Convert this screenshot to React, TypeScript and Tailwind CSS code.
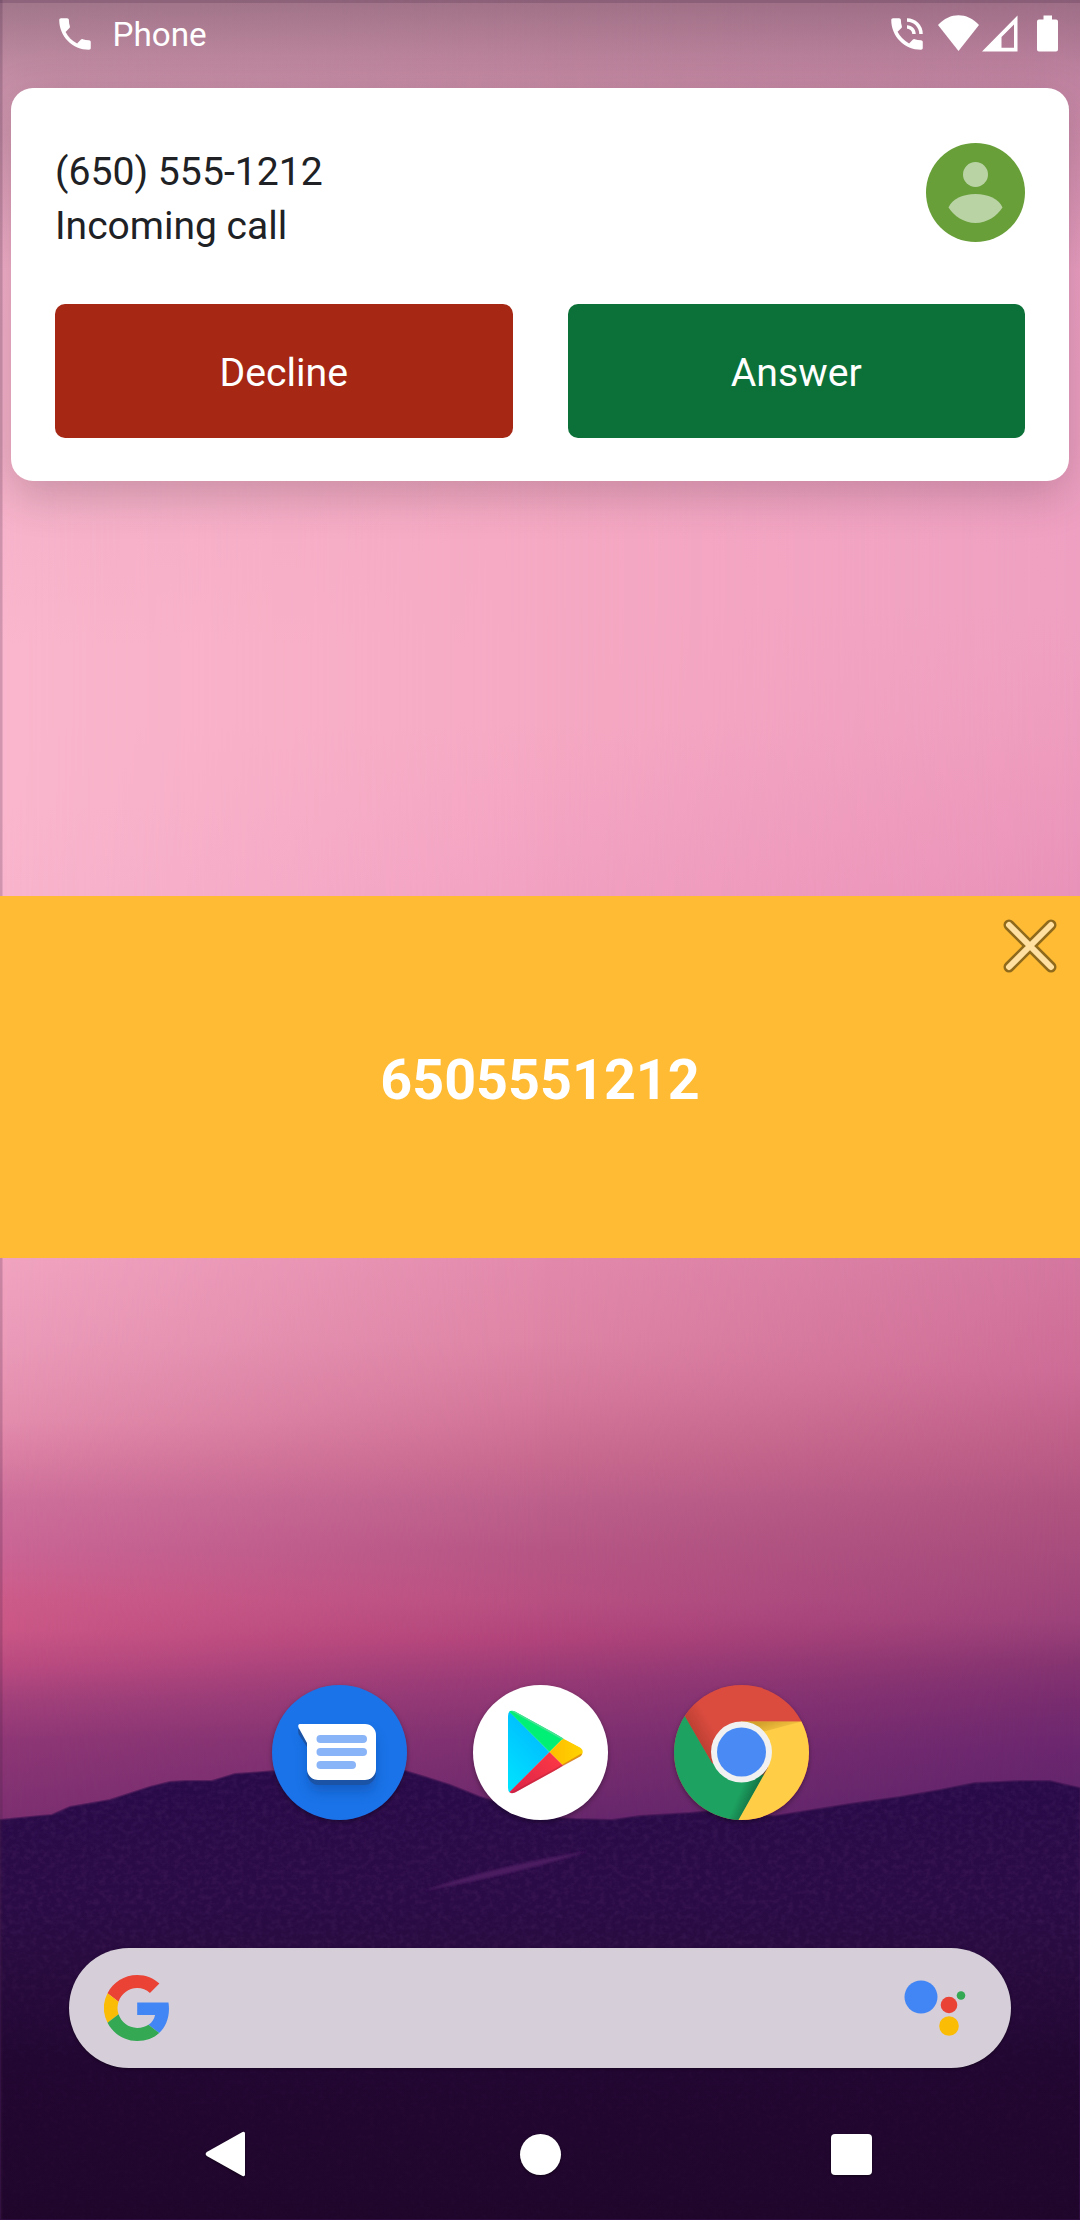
import React from 'react';

type Stop = [number, string];

const SKY_LEFT: Stop[] = [
  [0, '#f2adcb'], [500, '#f6b3ca'], [650, '#fab7cd'], [800, '#fab7cd'], [890, '#f9b5cd'], [1258, '#f1a4c0'], [1340, '#eb9bb9'], [1420, '#e48dad'],
  [1460, '#da7ea3'], [1500, '#ce6f9b'], [1550, '#ca6595'], [1600, '#cd5b89'], [1630, '#ca5786'],
  [1670, '#b84a80'], [1700, '#a2417b'], [1740, '#8f3776'], [1820, '#7c2f70'],
];
const SKY_MID: Stop[] = [
  [0, '#f0a5c6'], [550, '#f6a9c3'], [720, '#f6a9c3'], [890, '#f2a1c1'], [1258, '#e38aac'], [1340, '#de84a5'], [1400, '#d5789b'],
  [1460, '#c8698f'], [1500, '#bd608b'], [1550, '#b65685'], [1600, '#b85082'], [1640, '#b0437a'],
  [1680, '#973a76'], [1740, '#7e3070'], [1820, '#68276c'],
];
const SKY_RIGHT: Stop[] = [
  [0, '#ec9fc4'], [600, '#efa0c1'], [730, '#ee9cbe'], [890, '#e992b9'], [1258, '#d4779f'], [1370, '#cd6c96'], [1440, '#be5f88'],
  [1500, '#b05380'], [1560, '#a64b7c'], [1620, '#9c427a'], [1660, '#873571'], [1700, '#782c6f'],
  [1750, '#6a266e'], [1820, '#5e2469'],
];

function Vertical({ id, stops }: { id: string; stops: Stop[] }) {
  return (
    <linearGradient id={id} gradientUnits="userSpaceOnUse" x1="0" y1="0" x2="0" y2="1820">
      {stops.map(([y, c]) => (
        <stop key={y} offset={y / 1820} stopColor={c} />
      ))}
    </linearGradient>
  );
}

function Wallpaper() {
  const ridge =
    'M0 1820 L40 1816 L52 1815 L70 1807 L110 1800 L150 1787 L170 1782 L185 1781 L212 1781 L235 1774 L250 1773 L275 1771 L330 1762 L405 1771 L425 1777 L450 1785 L480 1797 L500 1803 L540 1817 L575 1819 L612 1820 L640 1816 L690 1813 L710 1811 L750 1816 L775 1816 L800 1812 L850 1804 L900 1797 L940 1790 L975 1783 L1000 1782 L1020 1781 L1050 1781 L1062 1784 L1080 1788 L1080 2220 L0 2220 Z';
  return (
    <svg className="absolute inset-0 h-full w-full" viewBox="0 0 1080 2220" aria-hidden="true">
      <defs>
        <Vertical id="skyL" stops={SKY_LEFT} />
        <Vertical id="skyM" stops={SKY_MID} />
        <Vertical id="skyR" stops={SKY_RIGHT} />
        <linearGradient id="fadeM" gradientUnits="userSpaceOnUse" x1="0" y1="0" x2="540" y2="0">
          <stop offset="0" stopColor="#fff" stopOpacity="0" />
          <stop offset="1" stopColor="#fff" />
        </linearGradient>
        <linearGradient id="fadeR" gradientUnits="userSpaceOnUse" x1="540" y1="0" x2="1080" y2="0">
          <stop offset="0" stopColor="#fff" stopOpacity="0" />
          <stop offset="1" stopColor="#fff" />
        </linearGradient>
        <mask id="maskM" maskUnits="userSpaceOnUse" x="0" y="0" width="1080" height="2220" style={{ maskType: 'alpha' }}>
          <rect width="1080" height="2220" fill="url(#fadeM)" />
        </mask>
        <mask id="maskR" maskUnits="userSpaceOnUse" x="0" y="0" width="1080" height="2220" style={{ maskType: 'alpha' }}>
          <rect width="1080" height="2220" fill="url(#fadeR)" />
        </mask>
        <linearGradient id="hill" gradientUnits="userSpaceOnUse" x1="0" y1="1760" x2="0" y2="2220">
          <stop offset="0" stopColor="#290a49" />
          <stop offset="0.3" stopColor="#2a0b46" />
          <stop offset="0.45" stopColor="#280b3e" />
          <stop offset="0.65" stopColor="#220732" />
          <stop offset="1" stopColor="#20062b" />
        </linearGradient>
        <linearGradient id="grainFade" gradientUnits="userSpaceOnUse" x1="0" y1="1760" x2="0" y2="2220">
          <stop offset="0" stopColor="#fff" stopOpacity="0.16" />
          <stop offset="0.35" stopColor="#fff" stopOpacity="0.16" />
          <stop offset="0.6" stopColor="#fff" stopOpacity="0.05" />
          <stop offset="1" stopColor="#fff" stopOpacity="0.03" />
        </linearGradient>
        <mask id="grainMask" maskUnits="userSpaceOnUse" x="0" y="1760" width="1080" height="460" style={{ maskType: 'alpha' }}>
          <path d={ridge} fill="url(#grainFade)" />
        </mask>
        <filter id="grain" x="0" y="0" width="100%" height="100%">
          <feTurbulence type="fractalNoise" baseFrequency="0.16 0.2" numOctaves="3" seed="4" />
          <feColorMatrix values="0 0 0 0 0.36  0 0 0 0 0.12  0 0 0 0 0.42  1.3 0 0 0 -0.5" />
        </filter>
        <filter id="soft" x="-20%" y="-50%" width="140%" height="200%">
          <feGaussianBlur stdDeviation="1.2" />
        </filter>
        <linearGradient id="scrim" x1="0" y1="0" x2="0" y2="1">
          <stop offset="0" stopColor="#1c1c20" stopOpacity="0.38" />
          <stop offset="0.3" stopColor="#1c1c20" stopOpacity="0.21" />
          <stop offset="1" stopColor="#1c1c20" stopOpacity="0" />
        </linearGradient>
      </defs>
      <rect width="1080" height="1830" fill="url(#skyL)" />
      <rect width="1080" height="1830" fill="url(#skyM)" mask="url(#maskM)" />
      <rect width="1080" height="1830" fill="url(#skyR)" mask="url(#maskR)" />
      <path d={ridge} fill="url(#hill)" stroke="#3a1250" strokeOpacity="0.6" strokeWidth="2" />
      <g mask="url(#grainMask)">
        <rect y="1760" width="1080" height="460" filter="url(#grain)" />
      </g>
      <path d="M423 1891 Q490 1867 588 1851 Q530 1871 423 1891 Z" fill="#4b1d60" filter="url(#soft)" />
      <rect width="1080" height="270" fill="url(#scrim)" />
      <rect width="1080" height="3" fill="#30183a" fillOpacity="0.18" />
      <rect width="2.5" height="2220" fill="#402040" fillOpacity="0.22" />
    </svg>
  );
}

const PHONE_PATH =
  'M6.62 10.79c1.44 2.83 3.76 5.14 6.59 6.59l2.2-2.2c.27-.27.67-.36 1.02-.24 1.12.37 2.33.57 3.57.57.55 0 1 .45 1 1V20c0 .55-.45 1-1 1-9.39 0-17-7.61-17-17 0-.55.45-1 1-1h3.5c.55 0 1 .45 1 1 0 1.25.2 2.45.57 3.57.11.35.03.74-.25 1.02l-2.2 2.2z';

function StatusBar() {
  return (
    <header className="flex h-[88px] items-start justify-between pr-[22px] pl-[54px] text-white">
      <div className="flex items-center">
        <svg className="mt-[13px] h-[42px] w-[42px]" viewBox="0 0 24 24" fill="currentColor">
          <path d={PHONE_PATH} />
        </svg>
        <span className="mt-[14px] ml-[16.500px] text-[33.200px] leading-[40px]">Phone</span>
      </div>
      <div className="flex pt-[15px]">
        <svg className="mt-[-2px] h-[42px] w-[42px]" viewBox="0 0 24 24" fill="currentColor">
          <path d="M20 15.5c-1.25 0-2.45-.2-3.57-.57a1.02 1.02 0 0 0-1.02.24l-2.2 2.2a15.05 15.05 0 0 1-6.59-6.59l2.2-2.21c.28-.26.36-.65.25-1C8.7 6.45 8.5 5.25 8.5 4c0-.55-.45-1-1-1H4c-.55 0-1 .45-1 1 0 9.39 7.61 17 17 17 .55 0 1-.45 1-1v-3.5c0-.55-.45-1-1-1zM19 12h2a9 9 0 0 0-9-9v2c3.87 0 7 3.13 7 7zm-4 0h2c0-2.76-2.24-5-5-5v2c1.66 0 3 1.34 3 3z" />
        </svg>
        <svg className="ml-[10px] h-[36px] w-[41px]" viewBox="0 0 41 36" fill="currentColor">
          <path d="M20.5 36 L0 10 C12 -3 29 -3 41 10 Z" />
        </svg>
        <svg className="ml-[3px] h-[37px] w-[36px]" viewBox="0 0 36 37" fill="currentColor">
          <path fillRule="evenodd" d="M0 36.500 L35.500 0.500 V36.500 Z M19.500 22 V32.800 H32 V9.500 Z" />
        </svg>
        <svg className="ml-[19px] h-[37px] w-[21px]" viewBox="0 0 21 36" fill="currentColor">
          <path d="M6.500 0H15v4h4a2 2 0 0 1 2 2v28a2 2 0 0 1-2 2H2a2 2 0 0 1-2-2V6a2 2 0 0 1 2-2h4.500z" />
        </svg>
      </div>
    </header>
  );
}

function CallCard() {
  return (
    <section className="mx-[11px] h-[393px] rounded-[22px] bg-white px-[44px] pt-[55px] text-[39.200px] text-[#202124] shadow-[0_14px_44px_rgba(60,40,50,0.24)]">
      <div className="flex h-[161px] items-start justify-between">
        <div className="pt-[2px] leading-[54px]">
          <p>(650) 555-1212</p>
          <p className="text-[39px]">Incoming call</p>
        </div>
        <svg className="h-[99px] w-[99px]" viewBox="0 0 99 99">
          <circle cx="49.5" cy="49.500" r="49.5" fill="#689f38" />
          <circle cx="49.500" cy="31.500" r="12.500" fill="#b9d3a5" />
          <path d="M22.500 64.500C26 56 37 51 49.500 51S73 56 76.500 64.500C71 73 61 80 49.500 80S28 73 22.500 64.500z" fill="#b9d3a5" />
        </svg>
      </div>
      <div className="flex gap-[55px] text-white">
        <button className="h-[134px] flex-1 rounded-[10px] bg-[#a52714] pt-[4px]">Decline</button>
        <button className="h-[134px] flex-1 rounded-[10px] bg-[#0b7138] pt-[4px]">Answer</button>
      </div>
    </section>
  );
}

function CallerBanner() {
  return (
    <section className="relative mt-[415px] flex h-[362px] items-center justify-center bg-[#ffbb33]">
      <span className="mt-[7px] text-[55.700px] font-bold text-white">6505551212</span>
      <button className="absolute top-[23px] right-[23px] h-[54px] w-[54px]" aria-label="Close">
        <svg viewBox="0 0 54 54" strokeLinecap="round">
          <path d="M6 6 48 48M48 6 6 48" stroke="#8f6a1c" strokeWidth="11" />
          <path d="M6 6 48 48M48 6 6 48" stroke="#ffe0a0" strokeWidth="6" />
        </svg>
      </button>
    </section>
  );
}

function MessagesIcon() {
  return (
    <svg className="h-full w-full" viewBox="0 0 135 135">
      <defs>
        <filter id="msgShadow" x="-30%" y="-30%" width="160%" height="180%">
          <feGaussianBlur stdDeviation="6" />
        </filter>
      </defs>
      <circle cx="67.5" cy="67.5" r="67.500" fill="#1a73e8" />
      <path d="M30 48H92a12 12 0 0 1 12 12V96a11 11 0 0 1-11 11H48a12 12 0 0 1-12-12V62z" fill="#0d4aa5" opacity="0.5" filter="url(#msgShadow)" />
      <path d="M26 44H92a12 12 0 0 1 12 12V88a12 12 0 0 1-12 12H47a12 12 0 0 1-12-12V62L26.500 49z" fill="#1b53a6" />
      <path d="M28 39H93a11 11 0 0 1 11 11V84a11 11 0 0 1-11 11H46a11 11 0 0 1-11-11V58L26.500 42.500Q25.500 39 28 39z" fill="#fff" />
      <g fill="#8ab4f8">
        <rect x="44.500" y="50" width="50.500" height="8" rx="4" />
        <rect x="44.500" y="63" width="50.500" height="8" rx="4" />
        <rect x="44.500" y="76" width="39.500" height="8" rx="4" />
      </g>
    </svg>
  );
}

function PlayIcon() {
  return (
    <svg className="h-full w-full" viewBox="0 0 135 135">
      <defs>
        <linearGradient id="playBlue" x1="0.6" y1="0" x2="0.1" y2="1">
          <stop offset="0" stopColor="#00b7ff" />
          <stop offset="1" stopColor="#00e5ff" />
        </linearGradient>
        <linearGradient id="playYellow" x1="1" y1="0" x2="0" y2="0">
          <stop offset="0" stopColor="#ffd800" />
          <stop offset="1" stopColor="#ffbc00" />
        </linearGradient>
        <linearGradient id="playRed" x1="1" y1="0" x2="0" y2="1">
          <stop offset="0" stopColor="#ff3a44" />
          <stop offset="1" stopColor="#d8224a" />
        </linearGradient>
        <clipPath id="playClip">
          <path d="M35 31Q35 24 42 26.500L107.500 62.500Q112 67 107.500 71.500L42 107.500Q35 110 35 103Z" />
        </clipPath>
      </defs>
      <circle cx="67.500" cy="67.500" r="67.500" fill="#fff" />
      <g clipPath="url(#playClip)">
        <path d="M34 24V110L76.500 67z" fill="url(#playBlue)" />
        <path d="M34 24.500L42 20L90 53.500L76.500 67z" fill="#00f076" />
        <path d="M76.500 67L90 53.500L116 67L90 80.500z" fill="url(#playYellow)" />
        <path d="M36 107.500L76.500 67L90 80.500L42 114z" fill="url(#playRed)" />
        <path d="M39 25.500 90 54" stroke="#4ce095" strokeWidth="2" fill="none" />
        <path d="M39 108.500 90 80.500 109 69.500" stroke="#a0203a" strokeOpacity="0.35" strokeWidth="2.500" fill="none" />
      </g>
    </svg>
  );
}

function ChromeIcon() {
  return (
    <svg className="h-full w-full" viewBox="0 0 135 135">
      <defs>
        <clipPath id="chromeClip">
          <circle cx="67.500" cy="67.500" r="67.500" />
        </clipPath>
        <linearGradient id="redShade" gradientUnits="userSpaceOnUse" x1="20" y1="55" x2="40" y2="43">
          <stop offset="0" stopColor="#8c2d20" stopOpacity="0.45" />
          <stop offset="1" stopColor="#8c2d20" stopOpacity="0" />
        </linearGradient>
        <linearGradient id="yellowShade" gradientUnits="userSpaceOnUse" x1="95" y1="36" x2="99" y2="48">
          <stop offset="0" stopColor="#a87916" stopOpacity="0.5" />
          <stop offset="1" stopColor="#a87916" stopOpacity="0.1" />
        </linearGradient>
        <linearGradient id="greenShade" gradientUnits="userSpaceOnUse" x1="80" y1="112" x2="66" y2="106">
          <stop offset="0" stopColor="#0d5232" stopOpacity="0.6" />
          <stop offset="1" stopColor="#0d5232" stopOpacity="0" />
        </linearGradient>
      </defs>
      <g clipPath="url(#chromeClip)">
        <rect width="135" height="135" fill="#db4c3f" />
        <path d="M11 31.500 38 78 38 60 70 36 60 0 30 0z" fill="url(#redShade)" />
        <path d="M11 31.500 38 78 67 90H94L64.500 135H0V10z" fill="#1da261" />
        <path d="M64.500 135 94 82.500 70 97 52 135z" fill="url(#greenShade)" />
        <path d="M67 36.500H135V135H64.500L94 82.500z" fill="#ffcd46" />
        <path d="M67 36.500H128L90 46.500z" fill="url(#yellowShade)" />
      </g>
      <circle cx="67.500" cy="67" r="30.500" fill="#f1f1f1" />
      <circle cx="67.500" cy="67" r="24.500" fill="#4a8af4" />
    </svg>
  );
}

function Dock() {
  const apps = [
    { name: 'Messages', Icon: MessagesIcon },
    { name: 'Play Store', Icon: PlayIcon },
    { name: 'Chrome', Icon: ChromeIcon },
  ];
  return (
    <nav className="mt-[427px] flex justify-center gap-[66px]">
      {apps.map(({ name, Icon }) => (
        <button key={name} aria-label={name} className="h-[135px] w-[135px] rounded-full shadow-[0_2px_5px_rgba(0,0,0,0.35)]">
          <Icon />
        </button>
      ))}
    </nav>
  );
}

function SearchBar() {
  return (
    <div className="mx-[69px] mt-[128px] flex h-[120px] items-center justify-between rounded-full bg-[#d6cfda] pr-[45px] pl-[35px] shadow-[0_1px_3px_rgba(0,0,0,0.4)]">
      <svg className="h-[66px] w-[65px]" viewBox="0 0 47 48" preserveAspectRatio="none">
        <path fill="#EA4335" d="M24 9.500c3.540 0 6.710 1.220 9.210 3.600l6.850-6.850C35.900 2.380 30.470 0 24 0 14.620 0 6.510 5.380 2.560 13.220l7.980 6.190C12.430 13.720 17.740 9.500 24 9.500z" />
        <path fill="#4285F4" d="M46.980 24.550c0-1.570-.15-3.090-.38-4.550H24v9.020h12.940c-.58 2.960-2.260 5.480-4.780 7.180l7.730 6c4.510-4.180 7.090-10.360 7.090-17.650z" />
        <path fill="#FBBC05" d="M10.530 28.590a14.500 14.500 0 0 1 0-9.180l-7.980-6.190a24 24 0 0 0 0 21.560z" />
        <path fill="#34A853" d="M24 48c6.480 0 11.930-2.130 15.890-5.810l-7.730-6c-2.150 1.450-4.920 2.300-8.160 2.300-6.260 0-11.570-4.220-13.470-9.910l-7.980 6.190C6.510 42.620 14.620 48 24 48z" />
      </svg>
      <svg className="h-[56px] w-[62px]" viewBox="0 0 62 56">
        <circle cx="17" cy="17" r="16.500" fill="#4285f4" />
        <circle cx="45" cy="25" r="8.300" fill="#ea4335" />
        <circle cx="45" cy="46" r="9.800" fill="#fbbc05" />
        <circle cx="57" cy="15.500" r="4.300" fill="#34a853" />
      </svg>
    </div>
  );
}

function NavigationBar() {
  return (
    <footer className="mt-[63px] flex items-center justify-between pr-[208px] pl-[205px] drop-shadow-[0_1px_1px_rgba(0,0,0,0.5)]">
      <svg className="h-[46px] w-[41px]" viewBox="0 0 41 46" fill="#fff">
        <path d="M1.800 21 37.500 1Q40 0 40 2.500V43.500Q40 46 37.500 45L1.800 25Q-.5 23 1.800 21z" />
      </svg>
      <div className="ml-[3px] h-[41px] w-[41px] rounded-full bg-white" />
      <div className="h-[41px] w-[41px] rounded-[4px] bg-white" />
    </footer>
  );
}

export default function App() {
  return (
    <main className="relative h-[2220px] w-[1080px] overflow-hidden bg-[#20062b] font-['Roboto',sans-serif]">
      <Wallpaper />
      <div className="relative flex flex-col">
        <StatusBar />
        <CallCard />
        <CallerBanner />
        <Dock />
        <SearchBar />
        <NavigationBar />
      </div>
    </main>
  );
}
